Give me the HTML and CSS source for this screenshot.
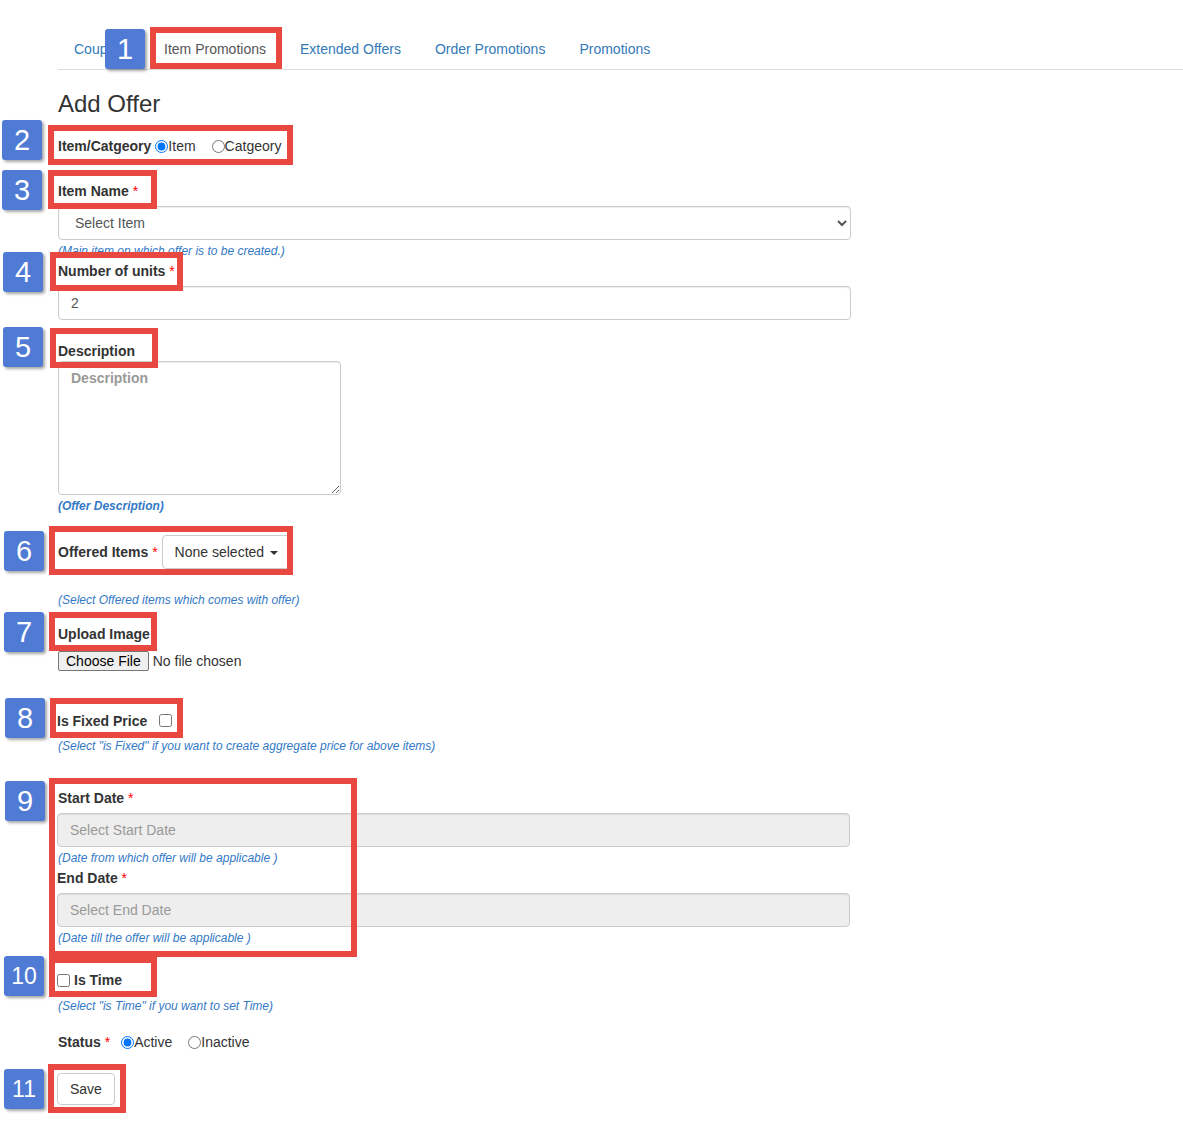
FILE: index.html
```html
<!DOCTYPE html>
<html lang="en">
<head>
  <meta charset="UTF-8">
  <title>Add Offer - Item Promotions</title>
  <link rel="stylesheet" href="styles.css">
</head>
<body>
  <div class="page">

    <!-- Tabs -->
    <ul class="nav-tabs">
      <li><a href="#">Coupons</a></li>
      <li class="active"><a href="#">Item Promotions</a></li>
      <li><a href="#">Extended Offers</a></li>
      <li><a href="#">Order Promotions</a></li>
      <li><a href="#">Promotions</a></li>
    </ul>

    <form class="offer-form">
      <h3 class="title">Add Offer</h3>

      <div class="row-type">
        <span class="lbl">Item/Catgeory</span>
        <input type="radio" name="type" checked><span>Item</span>
        <input type="radio" name="type" class="second"><span>Catgeory</span>
      </div>

      <div class="lbl item-name">Item Name <span class="req">*</span></div>
      <select class="form-control select-item">
        <option>Select Item</option>
      </select>
      <div class="help help-item">(Main item on which offer is to be created.)</div>

      <div class="lbl units">Number of units <span class="req">*</span></div>
      <input type="text" class="form-control units-input" value="2">

      <div class="lbl desc">Description</div>
      <textarea class="form-control desc-input" placeholder="Description"></textarea>
      <div class="help help-desc">(Offer Description)</div>

      <div class="row-offered">
        <span class="lbl">Offered Items <span class="req">*</span></span>
        <button type="button" class="multiselect">None selected <span class="caret"></span></button>
      </div>
      <div class="help help-offered">(Select Offered items which comes with offer)</div>

      <div class="lbl upload">Upload Image</div>
      <input type="file" class="file-input">

      <div class="lbl fixed">Is Fixed Price <input type="checkbox" class="fixed-check"></div>
      <div class="help help-fixed">(Select "is Fixed" if you want to create aggregate price for above items)</div>

      <div class="lbl start">Start Date <span class="req">*</span></div>
      <input type="text" class="form-control date-input" placeholder="Select Start Date" readonly>
      <div class="help help-date">(Date from which offer will be applicable )</div>

      <div class="lbl end">End Date <span class="req">*</span></div>
      <input type="text" class="form-control date-input" placeholder="Select End Date" readonly>
      <div class="help help-date">(Date till the offer will be applicable )</div>

      <div class="lbl time"><input type="checkbox" class="time-check"> Is Time</div>
      <div class="help help-time">(Select "is Time" if you want to set Time)</div>

      <div class="row-status">
        <span class="lbl">Status <span class="req">*</span></span>
        <input type="radio" name="status" checked><span>Active</span>
        <input type="radio" name="status" class="second"><span>Inactive</span>
      </div>

      <button type="button" class="btn-save">Save</button>
    </form>

    <!-- annotation marks -->
    <div class="mark" style="left:150px;top:27px;width:132px;height:42px"></div>
    <div class="mark" style="left:48px;top:125px;width:245px;height:40px"></div>
    <div class="mark" style="left:48px;top:170px;width:109px;height:39px"></div>
    <div class="mark" style="left:50px;top:252px;width:133px;height:39px"></div>
    <div class="mark" style="left:50px;top:328px;width:108px;height:40px"></div>
    <div class="mark" style="left:49px;top:526px;width:244px;height:49px"></div>
    <div class="mark" style="left:49px;top:612px;width:108px;height:39px"></div>
    <div class="mark" style="left:50px;top:698px;width:133px;height:40px"></div>
    <div class="mark" style="left:49px;top:778px;width:308px;height:179px"></div>
    <div class="mark" style="left:49px;top:957px;width:108px;height:40px"></div>
    <div class="mark" style="left:48px;top:1064px;width:78px;height:49px"></div>

    <div class="badge" style="left:105px;top:29px">1</div>
    <div class="badge" style="left:2px;top:120px">2</div>
    <div class="badge" style="left:2px;top:170px">3</div>
    <div class="badge" style="left:3px;top:252px">4</div>
    <div class="badge" style="left:3px;top:327px">5</div>
    <div class="badge" style="left:4px;top:531px">6</div>
    <div class="badge" style="left:4px;top:612px">7</div>
    <div class="badge" style="left:5px;top:698px">8</div>
    <div class="badge" style="left:5px;top:781px">9</div>
    <div class="badge small" style="left:4px;top:956px">10</div>
    <div class="badge small" style="left:4px;top:1069px">11</div>

  </div>
</body>
</html>
```

FILE: styles.css
```css
* {
  box-sizing: border-box;
}

body {
  margin: 0;
  font-family: "Liberation Sans", Arial, sans-serif;
  font-size: 14px;
  color: #333;
  background: #fff;
}

.page {
  position: relative;
  width: 1183px;
  min-height: 1121px;
  padding: 29px 0 0 58px;
}

/* tabs */
.nav-tabs {
  list-style: none;
  margin: 0;
  padding: 0;
  display: flex;
  border-bottom: 1px solid #ddd;
}

.nav-tabs li {
  margin-right: 2px;
}

.nav-tabs a {
  display: block;
  padding: 10px 16px;
  line-height: 20px;
  color: #337ab7;
  text-decoration: none;
}

.nav-tabs .active a {
  color: #555;
}

/* form */
.offer-form {
  width: 793px;
}

.title {
  margin: 21px 0 0;
  font-size: 24px;
  font-weight: normal;
  line-height: 26px;
}

.lbl {
  font-weight: bold;
  line-height: 18px;
  padding-top: 2px;
}

.req {
  color: #f00;
  font-weight: normal;
}

.help {
  font-size: 12px;
  font-style: italic;
  line-height: 14px;
  padding-top: 2px;
  color: #3479c6;
}

.form-control {
  display: block;
  width: 100%;
  height: 34px;
  padding: 6px 12px;
  font-family: inherit;
  font-size: 14px;
  line-height: 20px;
  color: #555;
  background: #fff;
  border: 1px solid #ccc;
  border-radius: 4px;
  box-shadow: inset 0 1px 1px rgba(0, 0, 0, 0.075);
}

.form-control::placeholder {
  color: #999;
}

.row-type, .row-status {
  display: flex;
  align-items: center;
  height: 20px;
  margin-top: 19px;
}

.row-type .lbl, .row-status .lbl {
  margin-right: 4px;
  padding-top: 0;
  line-height: 20px;
}

.row-type input, .row-status input {
  width: 13px;
  height: 13px;
  margin: 0;
}

.row-type .second, .row-status .second {
  margin-left: 16px;
}

.row-status {
  margin-top: 19px;
}

.row-status .lbl {
  margin-right: 11px;
}

.item-name { margin-top: 24px; }
.select-item { margin-top: 6px; }
.help-item { margin-top: 2px; }
.units { margin-top: 2px; }
.units-input { margin-top: 6px; }

.desc {
  margin-top: 21px;
  padding-top: 1px;
  line-height: 19px;
}

.desc-input {
  width: 283px;
  height: 134px;
  font-weight: bold;
  resize: vertical;
}

.help-desc {
  margin-top: 2px;
  font-weight: bold;
}

.row-offered {
  display: flex;
  align-items: center;
  margin-top: 22px;
}

.row-offered .lbl {
  margin-right: 4px;
  padding-top: 0;
  line-height: 20px;
}

.multiselect {
  height: 34px;
  padding: 6px 12px;
  font-family: inherit;
  font-size: 14px;
  color: #333;
  background: #fff;
  border: 1px solid #ccc;
  border-radius: 4px;
}

.caret {
  display: inline-block;
  width: 0;
  height: 0;
  margin-left: 2px;
  vertical-align: middle;
  border-top: 4px solid #333;
  border-left: 4px solid transparent;
  border-right: 4px solid transparent;
}

.help-offered { margin-top: 22px; }

.upload {
  margin-top: 17px;
  padding-top: 1px;
  line-height: 19px;
}

.file-input {
  display: block;
  margin-top: 7px;
  font-family: inherit;
  font-size: 14px;
  color: #333;
}

.file-input::file-selector-button {
  font-family: inherit;
  font-size: 14px;
  padding: 0 7px;
  height: 20px;
  margin-right: 4px;
  color: #000;
  background: #efefef;
  border: 1px solid #767676;
  border-radius: 2px;
}

.fixed {
  display: flex;
  align-items: center;
  margin-top: 39px;
  margin-left: -1px;
}

.fixed-check {
  width: 13px;
  height: 13px;
  margin: 0 0 2px 12px;
}

.help-fixed { margin-top: 7px; }
.start { margin-top: 34px; }
.end { margin-top: 2px; margin-left: -1px; }

.date-input {
  margin-top: 6px;
  margin-left: -1px;
  background: #eee;
}

.help-date { margin-top: 2px; }

.time {
  display: flex;
  align-items: center;
  margin-top: 24px;
  margin-left: -1px;
}

.time-check {
  width: 13px;
  height: 13px;
  margin: 0 4px 0 0;
}

.help-time { margin-top: 8px; }

.btn-save {
  display: block;
  margin-top: 21px;
  margin-left: -1px;
  height: 32px;
  padding: 5px 12px;
  font-family: inherit;
  font-size: 14px;
  color: #333;
  background: #fff;
  border: 1px solid #ccc;
  border-radius: 4px;
}

/* annotations */
.mark {
  position: absolute;
  border: 6px solid #e8483f;
}

.badge {
  position: absolute;
  width: 40px;
  height: 40px;
  background: #4f7bd5;
  color: #fff;
  border-radius: 3px;
  box-shadow: 2px 2px 3px rgba(0, 0, 0, 0.35);
  font-size: 29px;
  line-height: 40px;
  text-align: center;
}

.badge.small {
  font-size: 23px;
}
```
